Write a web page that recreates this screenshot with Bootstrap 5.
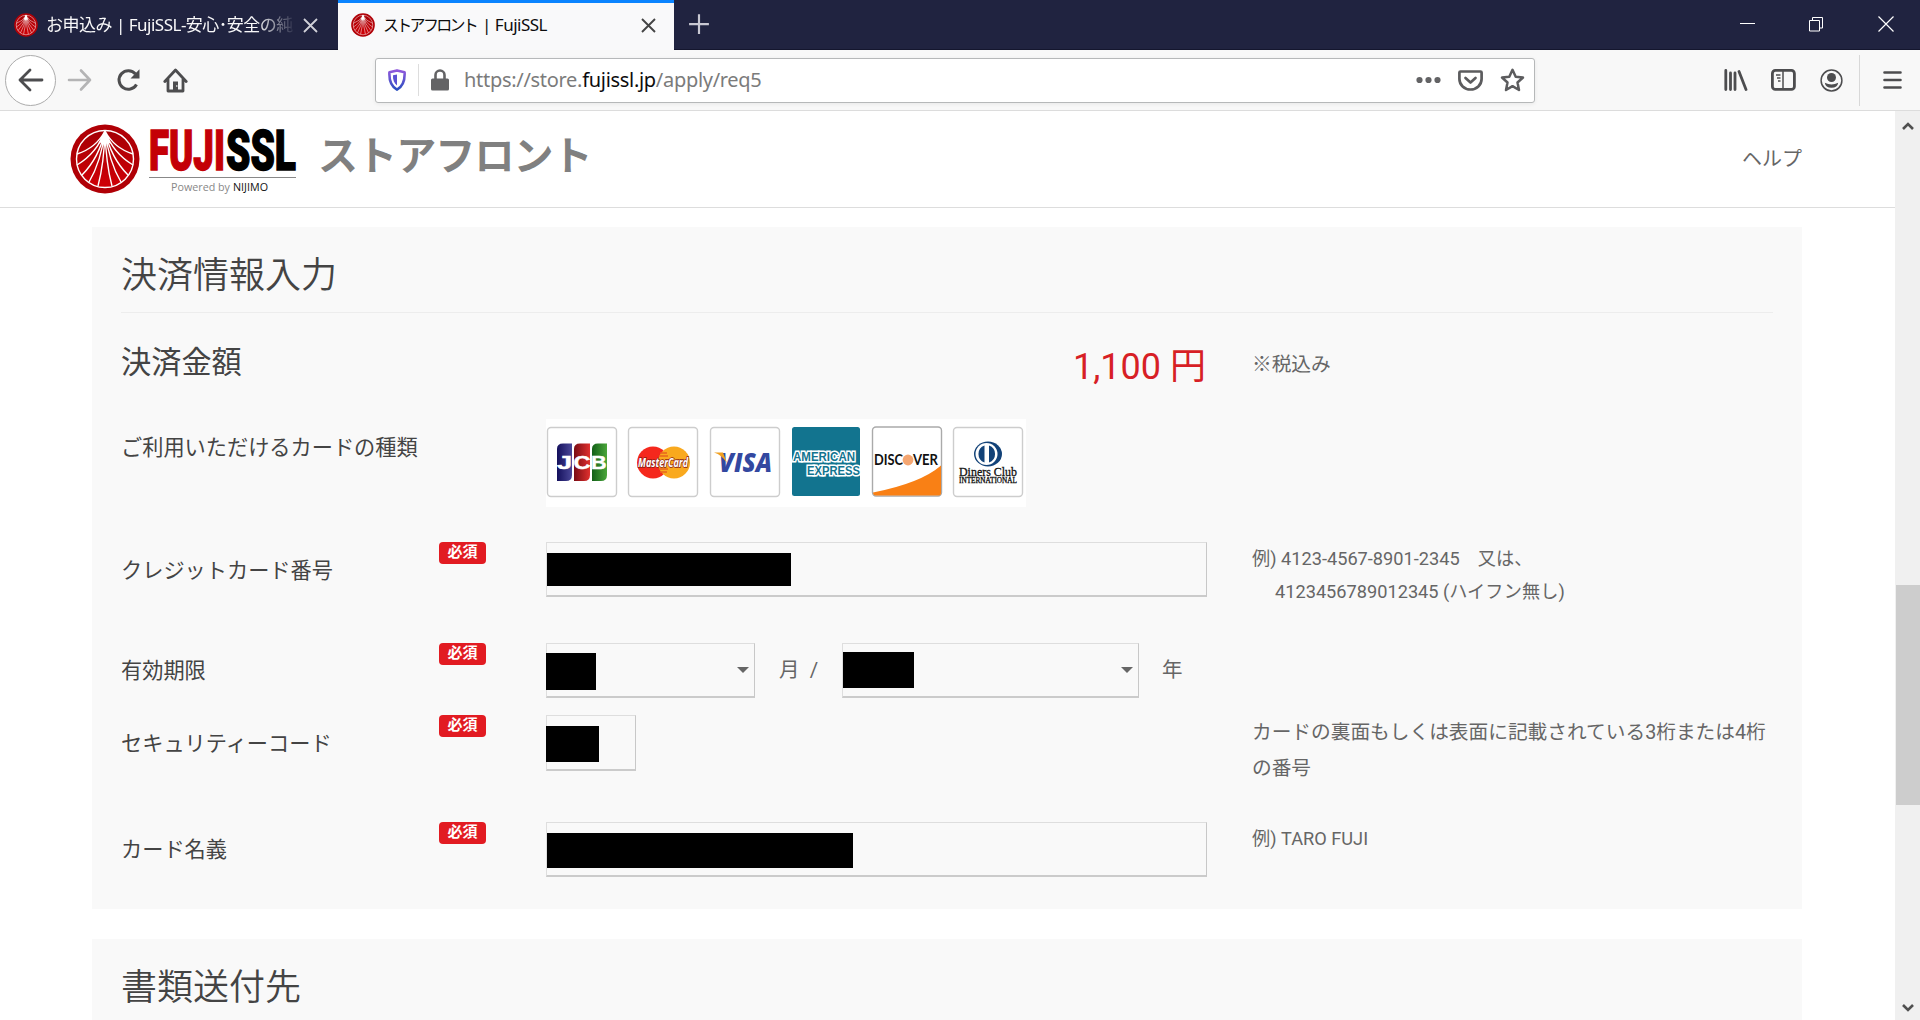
<!DOCTYPE html>
<html lang="ja">
<head>
<meta charset="utf-8">
<title>ストアフロント | FujiSSL</title>
<link rel="stylesheet" href="https://cdn.jsdelivr.net/npm/bootstrap@5.3.0/dist/css/bootstrap.min.css">
<style>
body{width:1920px;height:1020px;overflow:hidden;background:#fff;font-family:Roboto,"Noto Sans CJK JP",sans-serif;color:#444;line-height:1.2}
svg{display:block;flex:none}
.ui-font{font-family:"Noto Sans","Noto Sans CJK JP",sans-serif}
.tabstrip{height:50px;background:#202340;border-bottom:1px solid #14162e}
.fx-tab{height:50px;font-size:17px;white-space:nowrap;letter-spacing:-.5px;padding-left:14px}
.fx-tab .tab-title{margin-left:8px;flex:none;line-height:28px}
.tab-idle{width:338px;color:#f9f9fa}
.tab-idle .tab-title{overflow:hidden;width:249px;-webkit-mask-image:linear-gradient(90deg,#000 210px,transparent 250px);mask-image:linear-gradient(90deg,#000 210px,transparent 250px)}
.tab-live{width:336px;background:#f9f9fa;color:#0c0c0d;border-top:3px solid #0a84ff;padding:0 0 3px 13px}
.tab-live .tab-title{width:254px}
.kana-tight{font-size:16px;letter-spacing:-2.700px;margin-right:2px}
.win-btns{gap:54px;padding-right:26px;height:48px}
.toolbar-fx{height:61px;background:#f8f8f8;border-bottom:1px solid #dcdcdc}
.back-ring{width:51px;height:51px;border:1px solid #acacac;border-radius:50%;background:#fff;margin-left:5px}
.urlbox{width:1160px;height:45px;margin-left:187px;background:#fff;border:1px solid #b6b8b9;border-radius:3px;box-shadow:0 1px 4px #0001;padding-left:12px;padding-right:9px}
.urlbox .sep{width:1px;height:32px;background:#ddd;margin:0 12px}
.url-text{font-size:20px;color:#7b7b7b;margin-left:15px;letter-spacing:-.3px}
.url-text b{font-weight:400;color:#0c0c0d}
.vline{width:1px;height:51px;background:#d8d8d8}
.viewport{height:909px}
.site-head{height:97px;border-bottom:1px solid #ddd;padding-left:70px;padding-right:93px}
.brand-title{font:700 40px/1 "Noto Sans CJK JP",sans-serif;color:#808080;letter-spacing:-.9px;margin:0 0 12px 19px}
.help{font-size:20px;color:#666}
.pane{margin:19px 93px 0 92px;background:#f9f9f9;padding:0 29px 0 29px;height:682px}
.pane + .pane{margin-top:30px;height:81px}
.pane h2{font-size:36px;font-weight:350;line-height:36px;margin:0;padding-top:31px;height:86px;color:#444}
.pane h2.ruled{border-bottom:1px solid #ededed}
.pane .r{display:flex}
.c-label{width:318px;font-size:21.2px;flex:none}
.c-label span{display:block;line-height:30px}
.c-req{width:107px;flex:none}
.c-field{width:661px;flex:none}
.c-hint{margin-left:45px;font-size:18.200px;color:#666;white-space:nowrap}
.c-hint p{margin:0}
.need{width:47px;height:22px;border-radius:4px;background:#e21b22;color:#fff;font:700 15px/18px "Noto Sans CJK JP",sans-serif;text-align:center}
.box{height:55px;border:1px solid #dedede;border-right-color:#c8c8c8;border-bottom:2px solid #cbcbcb;background:#f9f9f9;display:flex;align-items:flex-start;justify-content:space-between}
.hide-bar{background:#000}
.caret{border:6px solid transparent;border-top:6px solid #666;border-bottom:0;margin:23px 5px 0 0}
.price{color:#d71f26;font-size:36px;font-weight:400;line-height:44px}
.scroll{width:25px;background:#f0f0f0}
.thumb{height:220px;width:24px;background:#cdcdcd}
</style>
<script src="https://cdn.jsdelivr.net/npm/bootstrap@5.3.0/dist/js/bootstrap.bundle.min.js"></script>
</head>
<body>
<svg width="0" height="0" class="position-absolute">
<defs>
<linearGradient id="gRed" x1="0" y1="0" x2="0" y2="1"><stop offset="0" stop-color="#a50005"/><stop offset="1" stop-color="#d00006"/></linearGradient>
<linearGradient id="gSh" x1="0" y1="0" x2="0" y2="1"><stop offset="0" stop-color="#9059dc"/><stop offset="1" stop-color="#2a4fc0"/></linearGradient>
<symbol id="fuji" viewBox="0 0 70 70">
<circle cx="35" cy="35" r="34.5" fill="#b00006"/><circle cx="35" cy="35" r="28.5" fill="url(#gRed)" stroke="#fff" stroke-width="1.4"/>
<g stroke="#fff" fill="none" stroke-width="1.4"><path d="M35 7Q26 24 7 30M35 7Q27 29 7 41M35 7Q29 34 12 51M35 7Q31 38 19 58M35 7Q34 40 28 62M35 7Q36 40 42 62M35 7Q39 38 51 58M35 7Q41 34 58 51M35 7Q43 29 63 41M35 7Q44 24 63 30"/></g>
<path d="M35 6L41 20L37 18L35 23L32 18L28 20Z" fill="#fff"/>
</symbol>
</defs>
</svg>

<header class="ui-font">
<div class="tabstrip d-flex">
  <div class="fx-tab tab-idle d-flex align-items-center">
    <svg width="24" height="24"><use href="#fuji"/></svg>
    <span class="tab-title">お申込み | FujiSSL-安心･安全の純</span>
    <svg class="ms-2" width="15" height="15" viewBox="0 0 15 15"><path d="M1 1L14 14M14 1L1 14" stroke="#d0d0d8" stroke-width="1.8"/></svg>
  </div>
  <div class="fx-tab tab-live d-flex align-items-center">
    <svg width="24" height="24"><use href="#fuji"/></svg>
    <span class="tab-title"><span class="kana-tight">ストアフロント</span> | FujiSSL</span>
    <svg class="ms-1" width="15" height="15" viewBox="0 0 15 15"><path d="M1 1L14 14M14 1L1 14" stroke="#444" stroke-width="1.9"/></svg>
  </div>
  <svg class="mt-1 pt-1" style="margin-left:14px" width="22" height="40" viewBox="0 0 22 40"><path d="M11 7V29M0 18H22" stroke="#c8c8d2" stroke-width="2.400"/></svg>
  <div class="win-btns d-flex align-items-center ms-auto">
    <svg width="15" height="16"><path d="M0 7.500H15" stroke="#fff"/></svg>
    <svg width="15" height="15" fill="none" stroke="#fff"><path d="M.5 3.500H10.500V14H.5ZM3.500 3.500V.5H13.500V11H10.500"/></svg>
    <svg width="16" height="16"><path d="M.5 .5L15.500 15.500M15.500 .5L.5 15.500" stroke="#fff" stroke-width="1.200"/></svg>
  </div>
</div>
<div class="toolbar-fx d-flex align-items-center">
  <div class="back-ring d-flex align-items-center justify-content-center"><svg width="26" height="24" viewBox="0 0 26 24" fill="none" stroke="#4d4d4f" stroke-width="2.800" stroke-linecap="round" stroke-linejoin="round"><path d="M24 12H2M12 2L2 12L12 22"/></svg></div>
  <svg style="margin-left:11px" width="25" height="24" viewBox="0 0 25 24" fill="none" stroke="#b4b4b5" stroke-width="2.600" stroke-linecap="round" stroke-linejoin="round"><path d="M2 12H23M14 2.500L23 12L14 21.500"/></svg>
  <svg style="margin-left:24px" width="25" height="24" viewBox="0 0 25 24" fill="none" stroke="#4d4d4f" stroke-width="3"><path d="M20.500 16.500A9.300 9.300 0 1 1 19.500 6"/><path d="M23.500 1.200V10.500H14.500Z" fill="#4d4d4f" stroke="none"/></svg>
  <svg style="margin-left:22px" width="25" height="25" viewBox="0 0 25 25" fill="none" stroke="#4d4d4f" stroke-width="2.800" stroke-linejoin="round" stroke-linecap="round"><path d="M1.800 13.500L12.500 2L23.200 13.500M5 11.500V23H20V11.500"/><path d="M10 13.500H15V22H10Z" fill="#4d4d4f" stroke="none"/><circle cx="13.800" cy="18" r=".8" fill="#fff" stroke="none"/></svg>
  <div class="urlbox d-flex align-items-center">
    <svg width="18" height="22" viewBox="0 0 18 22"><path d="M9 1.400L16.600 3.300C17 12 14 18 9 20.600C4 18 1 12 1.400 3.300Z" fill="none" stroke="url(#gSh)" stroke-width="2.600" stroke-linejoin="round"/><path d="M9 5.500V16.500C6 14 4.800 11 5 6.200Z" fill="#5a51d3"/></svg>
    <div class="sep"></div>
    <svg width="18" height="22" viewBox="0 0 18 22"><rect y="9.500" width="18" height="12" rx="1.500" fill="#636365"/><path d="M4.500 11V6a4.500 4.500 0 0 1 9 0V11" fill="none" stroke="#636365" stroke-width="2.600"/></svg>
    <span class="url-text">https://store.<b>fujissl.jp</b>/apply/req5</span>
    <div class="d-flex align-items-center ms-auto" style="gap:17px">
      <svg width="25" height="8" fill="#636365"><circle cx="3.500" cy="4" r="3.100"/><circle cx="12.500" cy="4" r="3.100"/><circle cx="21.500" cy="4" r="3.100"/></svg>
      <svg width="25" height="21" viewBox="0 0 25 21" fill="none" stroke="#5c5c5e" stroke-width="2.700" stroke-linecap="round" stroke-linejoin="round"><path d="M2.500 1.500H22.500Q23.600 1.500 23.600 2.500V9A11.100 10.500 0 0 1 1.400 9V2.500Q1.400 1.500 2.500 1.500Z"/><path d="M7.500 8L12.500 12.500L17.500 8"/></svg>
      <svg width="25" height="24" viewBox="0 0 25 24" fill="none" stroke="#5c5c5e" stroke-width="2.500" stroke-linejoin="round"><path d="M12.500 1.800L15.700 8.700L23 9.500L17.500 14.500L19 22L12.500 18.200L6 22L7.500 14.500L2 9.500L9.300 8.700Z"/></svg>
    </div>
  </div>
  <svg style="margin-left:189px" width="24" height="22" viewBox="0 0 24 22" stroke="#4d4d4f" stroke-width="2.800" stroke-linecap="round"><path d="M1.800 1.500V20.500M6.500 4V20.500M11 4V20.500M15 2.500L22 20.500"/></svg>
  <svg style="margin-left:23px" width="25" height="22" viewBox="0 0 25 22" fill="none" stroke="#4d4d4f"><rect x="1.400" y="1.400" width="22" height="19" rx="3" stroke-width="2.800"/><path d="M12 2V20M5 6H9.500M6 9H9.500M7 12H9.500" stroke-width="1.500"/></svg>
  <svg style="margin-left:24px" width="23" height="23" viewBox="0 0 23 23"><circle cx="11.500" cy="11.500" r="10.400" fill="none" stroke="#4d4d4f" stroke-width="1.500"/><circle cx="11.500" cy="8.500" r="4.500" fill="#4d4d4f"/><path d="M4.800 13.800Q11.500 17 18.200 13.800Q17.500 18.800 11.500 18.800Q5.500 18.800 4.800 13.800Z" fill="#4d4d4f"/></svg>
  <div class="vline" style="margin-left:16px"></div>
  <svg style="margin-left:23px" width="19" height="20" viewBox="0 0 19 20" stroke="#4d4d4f" stroke-width="2.600" stroke-linecap="round"><path d="M1.500 2.500H17.500M1.500 10H17.500M1.500 17.500H17.500"/></svg>
</div>
</header>

<div class="viewport d-flex">
<main class="flex-grow-1">
  <div class="site-head d-flex align-items-center">
    <svg width="70" height="70"><use href="#fuji"/></svg>
    <svg class="overflow-visible" style="margin-left:9px" width="150" height="70" viewBox="0 0 150 70">
      <g font-family="Roboto" font-weight="900" font-size="56" stroke-width="1.500"><text x="0" y="46" textLength="76" lengthAdjust="spacingAndGlyphs" fill="#c40006" stroke="#c40006">FUJI</text><text x="77" y="46" textLength="70" lengthAdjust="spacingAndGlyphs" fill="#000" stroke="#000">SSL</text></g>
      <path d="M0 53.500H147" stroke="#888"/>
      <g font-family="Open Sans" font-size="11.500"><text x="22" y="67" textLength="59" lengthAdjust="spacingAndGlyphs" fill="#888">Powered by</text><text x="84" y="67" textLength="35" lengthAdjust="spacingAndGlyphs" fill="#111">NIJIMO</text></g>
    </svg>
    <div class="brand-title">ストアフロント</div>
    <div class="help ms-auto">ヘルプ</div>
  </div>

  <section class="pane">
    <h2 class="ruled">決済情報入力</h2>
    <div class="r" style="height:106px">
      <div style="width:425px;font-size:30.200px;line-height:40px;padding-top:30px">決済金額</div>
      <div class="c-field text-end price" style="padding:32px 1px 0 0">1,100 円</div>
      <div class="c-hint" style="padding-top:40px;font-size:19.700px">※税込み</div>
    </div>
    <div class="r" style="height:123px">
      <div class="c-label" style="padding-top:14px"><span>ご利用いただけるカードの種類</span></div>
      <div class="c-req"></div>
      <svg width="480" height="88" viewBox="0 0 480 88">
        <defs>
          <linearGradient id="jb"><stop stop-color="#14105c"/><stop offset="1" stop-color="#4a4798"/></linearGradient>
          <linearGradient id="jr"><stop stop-color="#7a0c14"/><stop offset="1" stop-color="#e0302e"/></linearGradient>
          <linearGradient id="jg"><stop stop-color="#126018"/><stop offset="1" stop-color="#4aa63a"/></linearGradient>
        </defs>
        <rect width="480" height="88" fill="#fff"/>
        <g fill="#fff" stroke="#cdcdcd" stroke-width="1.400"><rect x="1.500" y="8.500" width="69" height="69" rx="3.500"/><rect x="82.500" y="8.500" width="69" height="69" rx="3.500"/><rect x="164.500" y="8.500" width="69" height="69" rx="3.500"/><rect x="326.500" y="8" width="69" height="69" rx="3.500" stroke="#aaa"/><rect x="407.500" y="8.500" width="69" height="69" rx="3.500"/></g>
        <path d="M17 24.500H26V56Q26 62 20 62H11V30Q11 24.500 17 24.500Z" fill="url(#jb)"/><path d="M34 24.500H44V56Q44 62 38 62H28V30Q28 24.500 34 24.500Z" fill="url(#jr)"/><path d="M52 24.500H61V56Q61 62 55 62H46V30Q46 24.500 52 24.500Z" fill="url(#jg)"/>
        <g fill="#fff" stroke="#fff" stroke-width=".5" font-family="Liberation Sans" font-weight="700" font-size="18.500"><text x="11" y="50" textLength="15" lengthAdjust="spacingAndGlyphs">J</text><text x="27.500" y="50" textLength="17" lengthAdjust="spacingAndGlyphs">C</text><text x="45" y="50" textLength="15.500" lengthAdjust="spacingAndGlyphs">B</text></g>
        <circle cx="107" cy="43.500" r="16" fill="#f5281d"/><circle cx="128" cy="43.500" r="16" fill="#f9a91e"/><path d="M114 34H121M113 37H122M113 50H122M114 53H121" stroke="#e8641e" stroke-width="1.300"/>
        <text x="92" y="48" font-family="Open Sans" font-weight="700" font-style="italic" font-size="12.500" textLength="50" lengthAdjust="spacingAndGlyphs" fill="#fff" stroke="#8a1a14" stroke-width="1.500" paint-order="stroke">MasterCard</text>
        <text x="173" y="52.500" font-family="Open Sans" font-weight="800" font-style="italic" font-size="26" textLength="53" lengthAdjust="spacingAndGlyphs" fill="#3348a0">VISA</text><path d="M168 33.500H177L181 44Q176 36 168 33.500Z" fill="#f0a020"/>
        <rect x="246" y="8" width="68" height="69" rx="2.500" fill="#12748f"/>
        <g font-family="Liberation Sans" font-weight="700" font-size="12" fill="#12748f" stroke="#fff" stroke-width="3" paint-order="stroke"><text x="247" y="42" textLength="62" lengthAdjust="spacingAndGlyphs">AMERICAN</text><text x="261" y="56" textLength="53" lengthAdjust="spacingAndGlyphs">EXPRESS</text></g>
        <path d="M327 73.500Q375 64 395 46.500V74Q395 76.500 392.500 76.500H330Q327 76.500 327 73.500Z" fill="#f98015"/>
        <circle cx="362" cy="41" r="5.400" fill="#f4a672"/>
        <g font-family="Lato" font-weight="700" font-size="15" fill="#111"><text x="328" y="46.300" textLength="29" lengthAdjust="spacingAndGlyphs">DISC</text><text x="367" y="46.300" textLength="25" lengthAdjust="spacingAndGlyphs">VER</text></g>
        <ellipse cx="442" cy="35" rx="14" ry="12.500" fill="#124278"/><circle cx="440.500" cy="35" r="11" fill="#fff"/><path d="M438.500 26.500A9 9 0 0 0 438.500 43.500ZM443 26.500A9 9 0 0 1 443 43.500Z" fill="#124278"/>
        <g font-family="Liberation Serif" fill="#111" stroke="#111" stroke-width=".3"><text x="413" y="57" font-size="13" textLength="58" lengthAdjust="spacingAndGlyphs">Diners Club</text><text x="413" y="64" font-size="7.300" textLength="58" lengthAdjust="spacingAndGlyphs">INTERNATIONAL</text></g>
      </svg>
    </div>
    <div class="r" style="height:101px">
      <div class="c-label" style="padding-top:14px"><span>クレジットカード番号</span></div>
      <div class="c-req"><div class="need">必須</div></div>
      <div class="c-field"><div class="box"><div class="hide-bar" style="width:244px;height:33px;margin-top:10px"></div></div></div>
      <div class="c-hint" style="line-height:33px"><p>例) 4123-4567-8901-2345　又は、</p><p style="padding-left:23px">4123456789012345 (ハイフン無し)</p></div>
    </div>
    <div class="r" style="height:72px">
      <div class="c-label" style="padding-top:13px"><span>有効期限</span></div>
      <div class="c-req"><div class="need">必須</div></div>
      <div class="c-field d-flex" style="font-size:20.500px;line-height:54px;color:#666;white-space:nowrap">
        <div class="box" style="width:209px"><div class="hide-bar" style="width:50px;height:37px;margin:9px 0 0 -1px"></div><div class="caret"></div></div>
        <div style="width:87px;padding-left:24px">月&nbsp; /</div>
        <div class="box" style="width:297px"><div class="hide-bar" style="width:71px;height:36px;margin-top:8px"></div><div class="caret"></div></div>
        <div style="padding-left:23px">年</div>
      </div>
    </div>
    <div class="r" style="height:107px">
      <div class="c-label" style="padding-top:14px"><span>セキュリティーコード</span></div>
      <div class="c-req"><div class="need">必須</div></div>
      <div class="c-field"><div class="box" style="width:90px;height:56px"><div class="hide-bar" style="width:53px;height:36px;margin:10px 0 0 -1px"></div></div></div>
      <div class="c-hint" style="font-size:19.700px;line-height:36px"><p>カードの裏面もしくは表面に記載されている3桁または4桁</p><p>の番号</p></div>
    </div>
    <div class="r">
      <div class="c-label" style="padding-top:13px"><span>カード名義</span></div>
      <div class="c-req"><div class="need">必須</div></div>
      <div class="c-field"><div class="box"><div class="hide-bar" style="width:306px;height:35px;margin-top:10px"></div></div></div>
      <div class="c-hint" style="line-height:34px">例) TARO FUJI</div>
    </div>
  </section>
  <section class="pane"><h2>書類送付先</h2></section>
</main>
<div class="scroll d-flex flex-column align-items-center">
  <svg style="margin-top:10px" width="12" height="10"><path d="M1 8L6 3L11 8" fill="none" stroke="#505050" stroke-width="2.600"/></svg>
  <div class="thumb" style="margin-top:454px"></div>
  <svg class="mt-auto" style="margin-bottom:7px" width="12" height="10"><path d="M1 2L6 7L11 2" fill="none" stroke="#505050" stroke-width="2.600"/></svg>
</div>
</div>
</body>
</html>
